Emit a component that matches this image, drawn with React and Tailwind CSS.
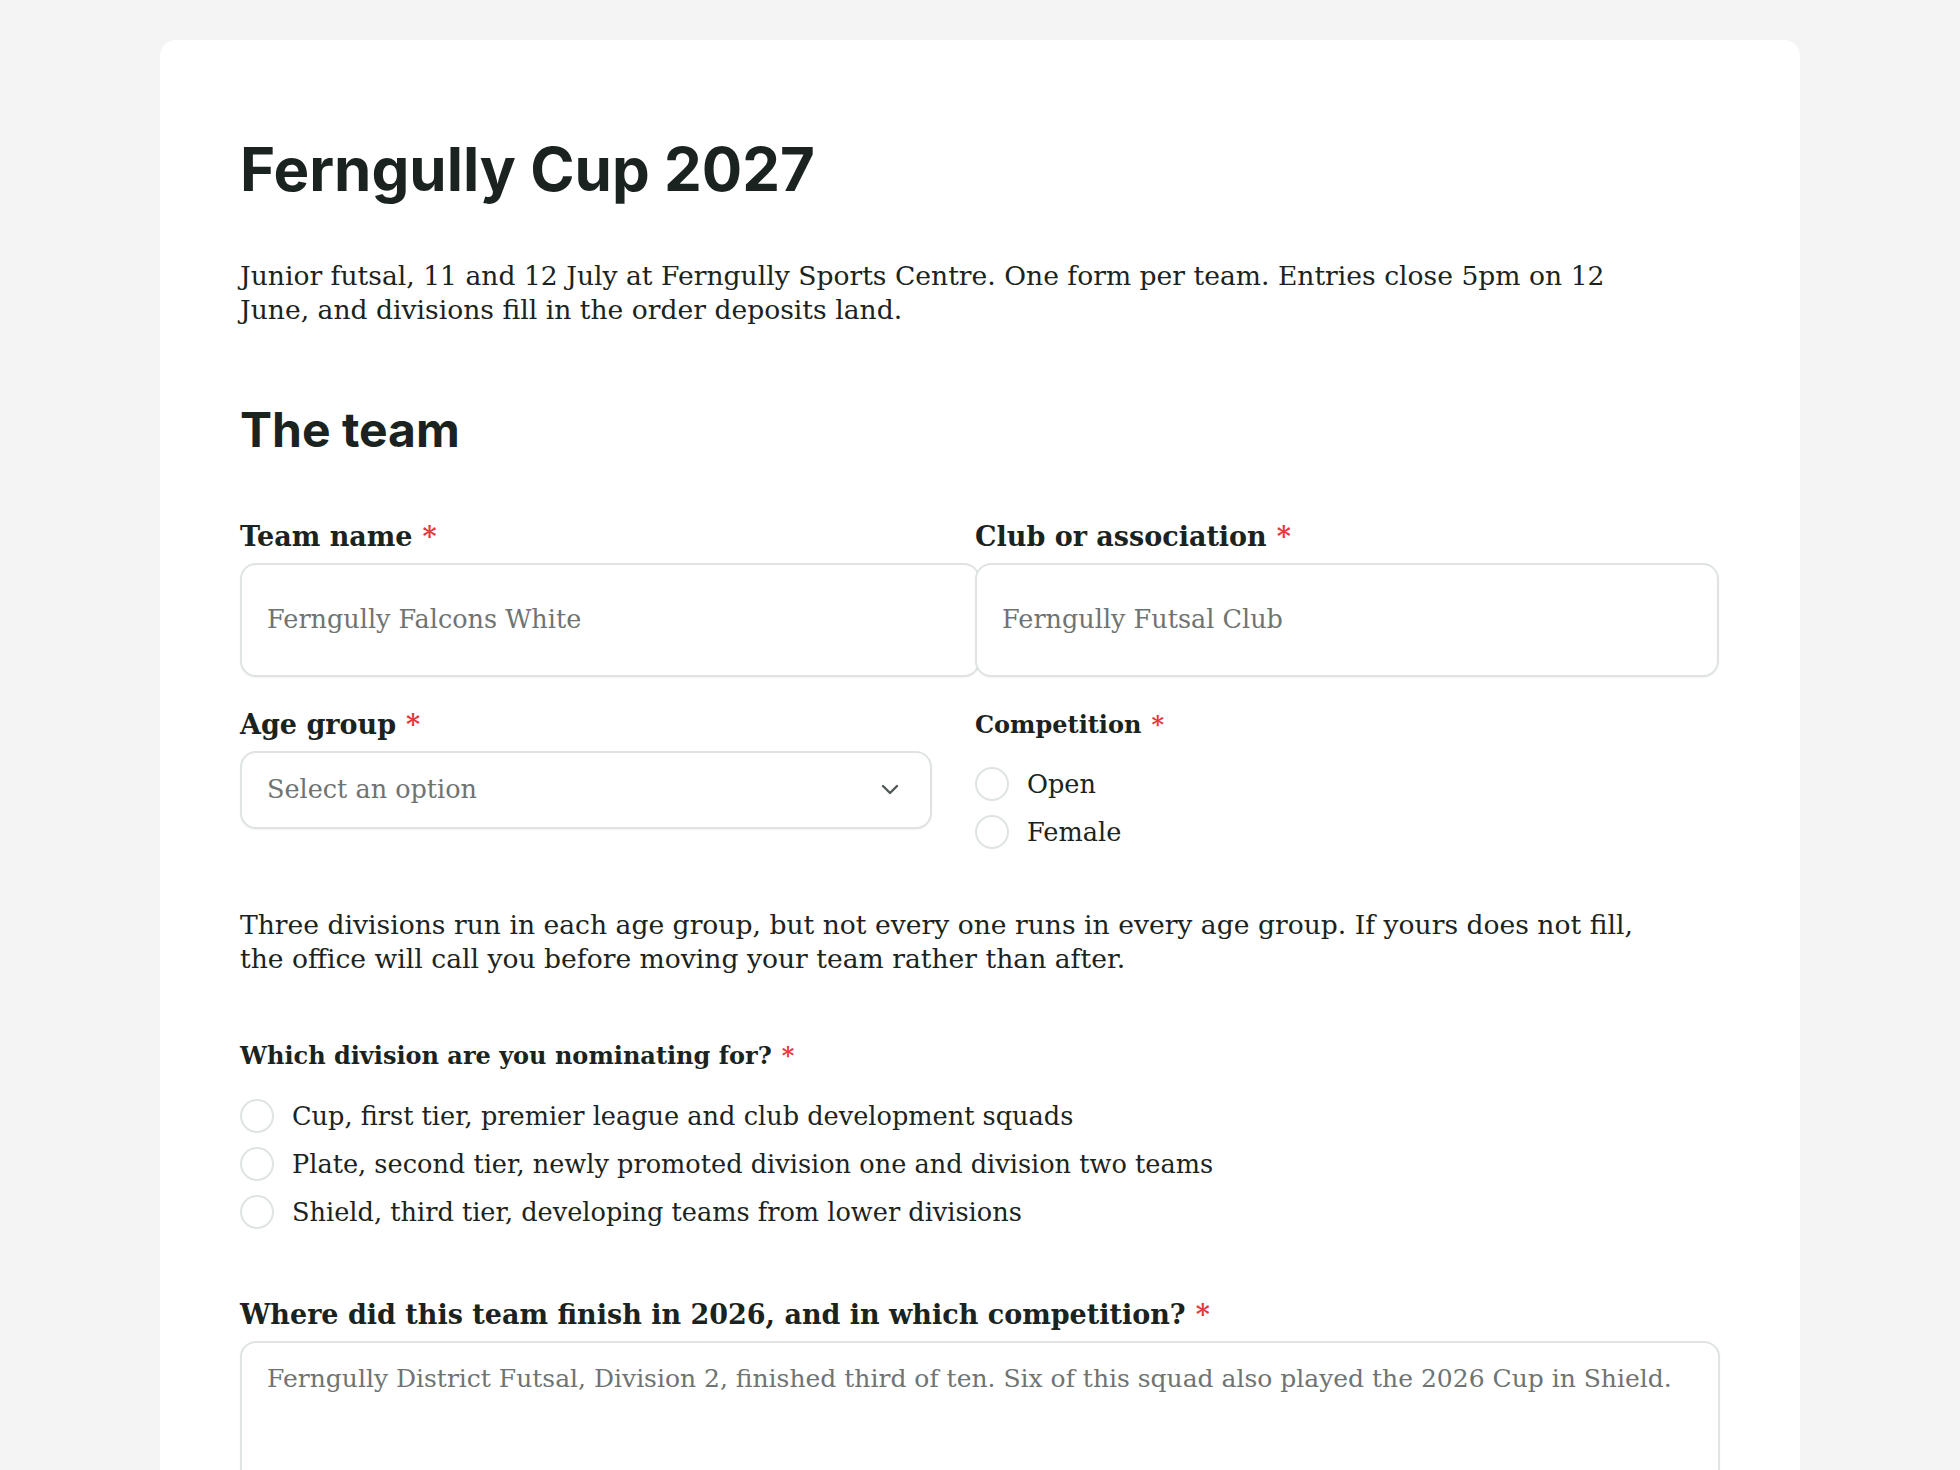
import React from "react";

const serif = "font-['DejaVu_Serif',serif]";
const heading = "font-['Inter',sans-serif]";

const Req = () => <span className="ml-[10px] font-bold text-[#e5383b]">*</span>;

const Radio = ({ label }) => (
  <label className="flex items-center gap-[18px] text-[25.6px] leading-[48px]">
    <span className="h-[34px] w-[34px] shrink-0 rounded-full border-2 border-[#dfe4e3] bg-white" />
    <span>{label}</span>
  </label>
);

const inputBox =
  "rounded-2xl border-2 border-[#dfe4e3] bg-white shadow-[0_1px_2px_rgba(0,0,0,0.05)] px-[25px] text-[25.5px] text-[#6f7472]";

export default function App() {
  return (
    <div className={`min-h-screen bg-[#f4f4f4] pt-10 ${serif} text-[#1b2320]`}>
      <div className="mx-auto w-[1640px] rounded-t-2xl bg-white px-20 pt-[93px] pb-20">
        <h1 className={`${heading} text-[60px] font-bold leading-[1.2]`}>Ferngully Cup 2027</h1>

        <p className="mt-[54px] max-w-[1430px] text-[26.6px] leading-[34px]">
          Junior futsal, 11 and 12 July at Ferngully Sports Centre. One form per team. Entries close 5pm on 12
          June, and divisions fill in the order deposits land.
        </p>

        <h2 className={`${heading} mt-[74px] text-[48px] font-bold leading-[1.2]`}>The team</h2>

        <div className="mt-[58px] grid grid-cols-[692px_744px] gap-x-[43px]">
          <div className="flex flex-col">
            <label className="text-[27px] font-bold leading-[40px]">
              Team name
              <Req />
            </label>
            <div className={`${inputBox} mt-[6px] flex h-[114px] w-[740px] items-center`}>
              Ferngully Falcons White
            </div>
          </div>
          <div className="flex flex-col">
            <label className="text-[27px] font-bold leading-[40px]">
              Club or association
              <Req />
            </label>
            <div className={`${inputBox} relative mt-[6px] flex h-[114px] items-center`}>
              Ferngully Futsal Club
            </div>
          </div>

          <div className="mt-[28px] flex flex-col">
            <label className="text-[27px] font-bold leading-[40px]">
              Age group
              <Req />
            </label>
            <div className={`${inputBox} mt-[6px] flex h-[78px] items-center justify-between pr-[30px]`}>
              <span>Select an option</span>
              <svg width="20" height="12" viewBox="0 0 20 12" fill="none" stroke="#4f5a56" strokeWidth="2.4" strokeLinecap="round" strokeLinejoin="round">
                <path d="M3 2l7 7 7-7" />
              </svg>
            </div>
          </div>
          <div className="mt-[28px] flex flex-col">
            <label className="text-[24px] font-bold leading-[40px]">
              Competition
              <Req />
            </label>
            <div className="mt-[15px] flex flex-col">
              <Radio label="Open" />
              <Radio label="Female" />
            </div>
          </div>
        </div>

        <p className="mt-[52px] max-w-[1430px] text-[26.6px] leading-[34px]">
          Three divisions run in each age group, but not every one runs in every age group. If yours does not fill,
          the office will call you before moving your team rather than after.
        </p>

        <div className="mt-[60px]">
          <label className="text-[24px] font-bold leading-[40px]">
            Which division are you nominating for?
            <Req />
          </label>
          <div className="mt-[16px] flex flex-col">
            <Radio label="Cup, first tier, premier league and club development squads" />
            <Radio label="Plate, second tier, newly promoted division one and division two teams" />
            <Radio label="Shield, third tier, developing teams from lower divisions" />
          </div>
        </div>

        <div className="mt-[59px] flex flex-col">
          <label className="text-[27px] font-bold leading-[40px]">
            Where did this team finish in 2026, and in which competition?
            <Req />
          </label>
          <div className={`${inputBox} mt-[6px] h-[200px] pt-[16px] pr-[16px] text-[25px] leading-[40px]`}>
            Ferngully District Futsal, Division 2, finished third of ten. Six of this squad also played the 2026 Cup in Shield.
          </div>
        </div>
      </div>
    </div>
  );
}
